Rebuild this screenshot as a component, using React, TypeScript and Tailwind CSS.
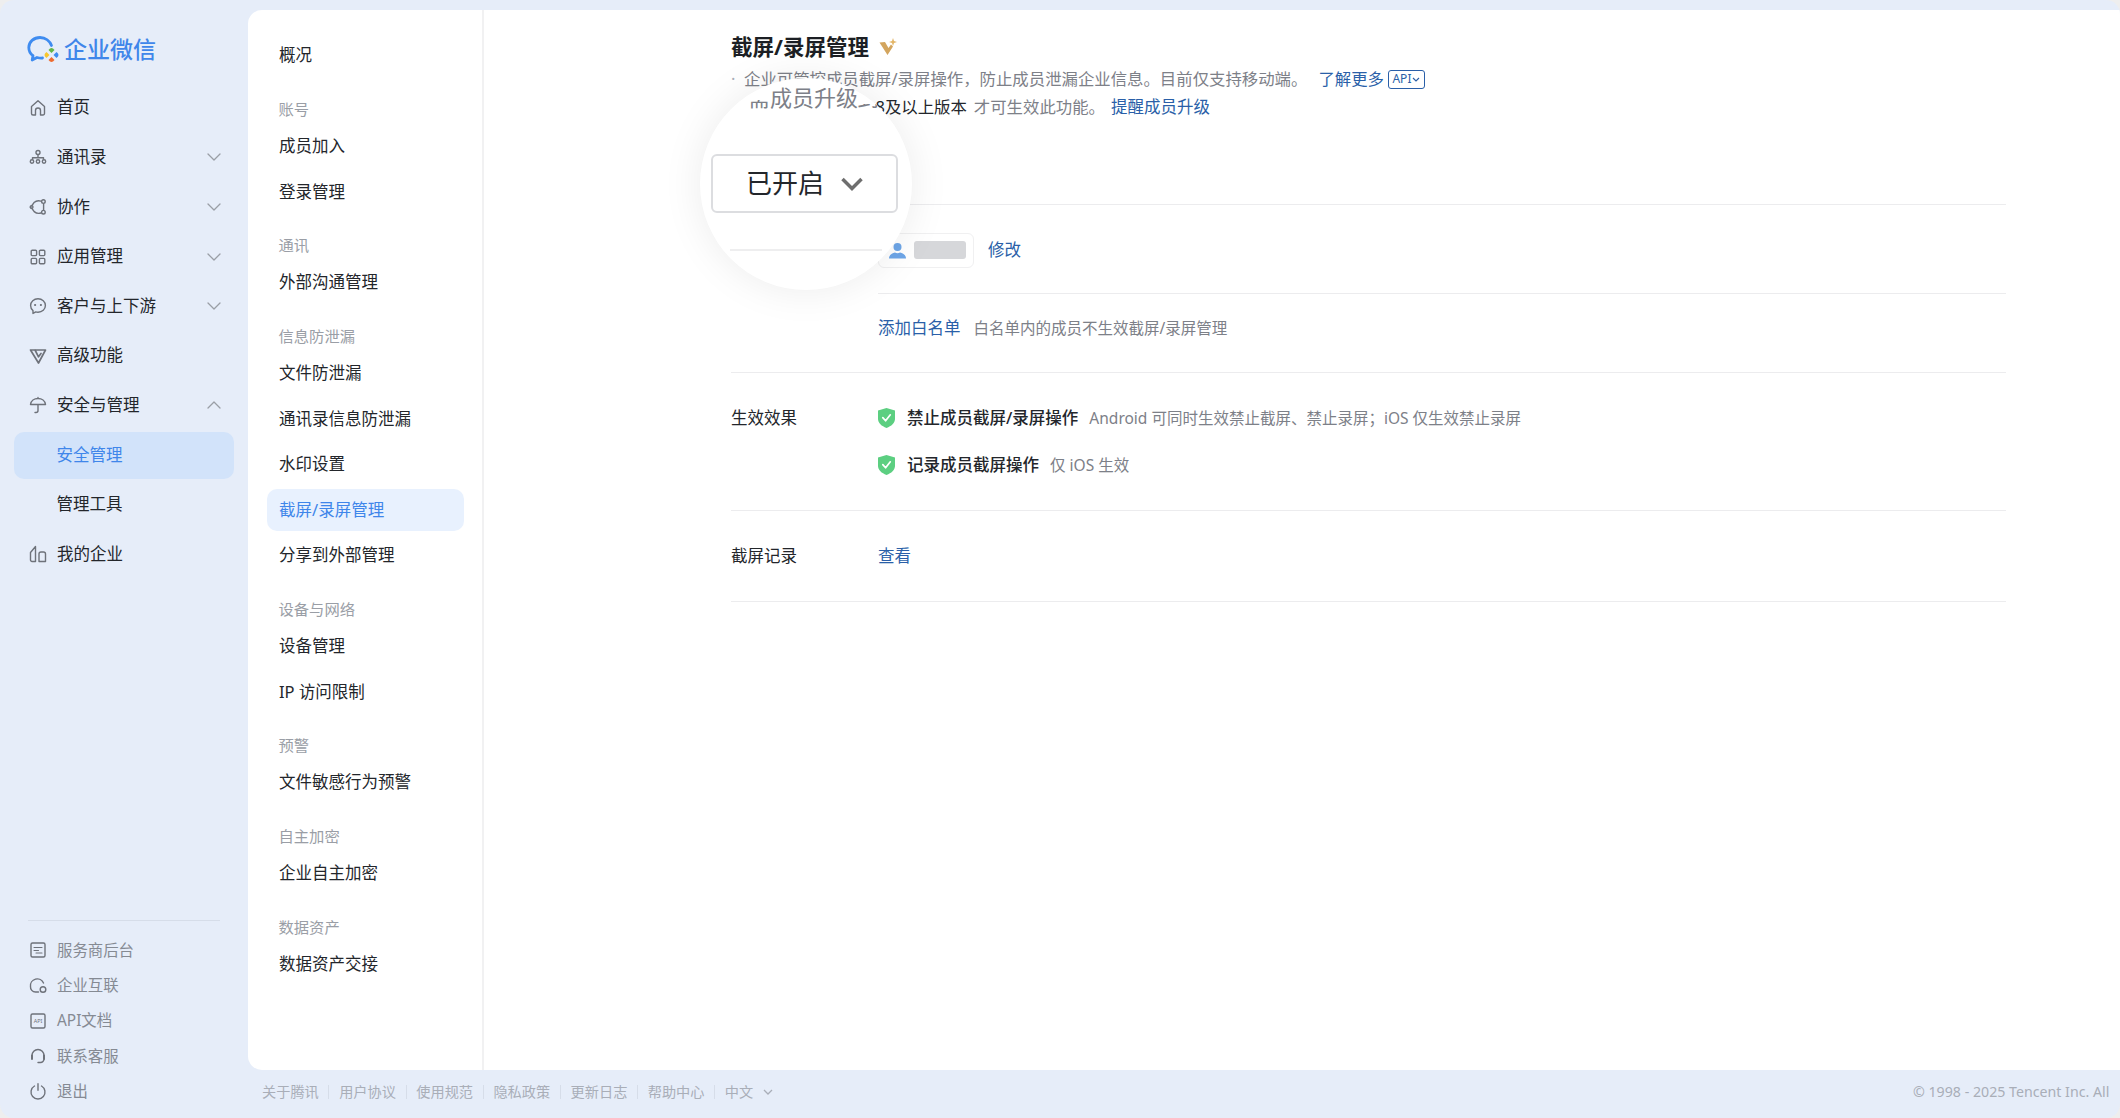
import type { ReactNode } from "react";

function Ico({ children, size = 18 }: { children: ReactNode; size?: number }) {
  return (
    <svg width={size} height={size} viewBox="0 0 18 18" fill="none" stroke="#6e727a" strokeWidth="1.4" strokeLinecap="round" strokeLinejoin="round" className="shrink-0">
      {children}
    </svg>
  );
}

function Chevron({ up = false }: { up?: boolean }) {
  return (
    <svg width="14" height="8" viewBox="0 0 14 8" fill="none" stroke="#9a9ea6" strokeWidth="1.3" strokeLinecap="round" strokeLinejoin="round" className="shrink-0">
      <path d={up ? "M1 7l6-6 6 6" : "M1 1l6 6 6-6"} />
    </svg>
  );
}

const mainNav: { label: string; icon: ReactNode; arrow?: "down" | "up" }[] = [
  { label: "首页", icon: <path d="M2.5 7.5 9 1.8l6.5 5.7v7a1.5 1.5 0 0 1-1.5 1.5h-2.5v-4.5a2.5 2.5 0 0 0-5 0V16H4a1.5 1.5 0 0 1-1.5-1.5z" /> },
  {
    label: "通讯录",
    arrow: "down",
    icon: (
      <>
        <circle cx="9" cy="4.5" r="2" />
        <path d="M3.5 11V9.8h11V11M9 7v2.8" />
        <circle cx="3" cy="13.5" r="1.7" />
        <circle cx="9" cy="13.5" r="1.7" />
        <circle cx="15" cy="13.5" r="1.7" />
      </>
    ),
  },
  {
    label: "协作",
    arrow: "down",
    icon: (
      <>
        <path d="M12 3.2A7 7 0 0 0 5 4.6L2.6 8M2.6 10l2.6 3.6a7 7 0 0 0 6.8 1.4M14.6 6v6" />
        <circle cx="14.4" cy="3.6" r="1.8" />
        <circle cx="14.4" cy="14.2" r="1.8" />
        <circle cx="2.6" cy="9" r="1.4" />
      </>
    ),
  },
  {
    label: "应用管理",
    arrow: "down",
    icon: (
      <>
        <rect x="2.2" y="2.2" width="5.4" height="5.4" rx="1" />
        <rect x="10.4" y="2.2" width="5.4" height="5.4" rx="1" />
        <rect x="2.2" y="10.4" width="5.4" height="5.4" rx="1" />
        <rect x="10.4" y="10.4" width="5.4" height="5.4" rx="1" />
      </>
    ),
  },
  {
    label: "客户与上下游",
    arrow: "down",
    icon: (
      <>
        <path d="M9 1.8c4.2 0 7.4 2.9 7.4 6.7s-3.2 6.7-7.4 6.7c-.8 0-1.5-.1-2.2-.3L4 16.4v-2.8C2.5 12.4 1.6 10.6 1.6 8.5 1.6 4.7 4.8 1.8 9 1.8z" />
        <path d="M6 8h.2M11.8 8h.2" strokeWidth="2" />
      </>
    ),
  },
  { label: "高级功能", icon: <path d="M1.5 3h15L9.5 16zM6 3l3.5 6.8L12 6.5" strokeWidth="1.7" /> },
  {
    label: "安全与管理",
    arrow: "up",
    icon: <path d="M1.5 8.5C2 4.8 5.2 2.5 9 2.5s7 2.3 7.5 6zM9 1.5v1M9 8.5v6a2 2 0 0 1-2 2H6" />,
  },
];

const bottomNav: { label: string; icon: ReactNode }[] = [
  {
    label: "服务商后台",
    icon: (
      <>
        <rect x="2" y="2" width="14" height="14" rx="1.5" />
        <path d="M5 6.5h8M5 9.5h4.5M7 12h6" strokeWidth="1.1" />
      </>
    ),
  },
  {
    label: "企业互联",
    icon: (
      <>
        <path d="M9.5 16H6.5A5 5 0 0 1 1.500 10.500 6.800 6.800 0 0 1 14.500 7" />
        <circle cx="14" cy="13.500" r="2.800" />
      </>
    ),
  },
  {
    label: "API文档",
    icon: (
      <>
        <rect x="2" y="2" width="14" height="14" rx="1.5" />
        <text x="9" y="10.500" textAnchor="middle" fontSize="5.500" fill="#6e727a" stroke="none">API</text>
      </>
    ),
  },
  {
    label: "联系客服",
    icon: (
      <>
        <path d="M3 10V8.5a6 6 0 0 1 12 0V12a3.500 3.500 0 0 1-3.500 3.500H9" />
        <path d="M3 8.5v3.5M15 8.5V12" strokeWidth="2" />
      </>
    ),
  },
  {
    label: "退出",
    icon: <path d="M5.5 4a7 7 0 1 0 7 0M9 1.8v6.5" />,
  },
];

const subNav: { heading?: string; items: string[] }[] = [
  { items: ["概况"] },
  { heading: "账号", items: ["成员加入", "登录管理"] },
  { heading: "通讯", items: ["外部沟通管理"] },
  { heading: "信息防泄漏", items: ["文件防泄漏", "通讯录信息防泄漏", "水印设置", "截屏/录屏管理", "分享到外部管理"] },
  { heading: "设备与网络", items: ["设备管理", "IP 访问限制"] },
  { heading: "预警", items: ["文件敏感行为预警"] },
  { heading: "自主加密", items: ["企业自主加密"] },
  { heading: "数据资产", items: ["数据资产交接"] },
];

const footerLinks = ["关于腾讯", "用户协议", "使用规范", "隐私政策", "更新日志", "帮助中心"];

function Logo() {
  return (
    <svg width="33" height="29" viewBox="0 0 33 29" fill="none" className="shrink-0">
      <path
        d="M24.5 10.5C22.8 6 18.5 2.5 13 2.5 6.8 2.5 1.8 6.8 1.8 12.5c0 3.3 1.6 6.3 4.200 8.200L5.200 25 10 22.500c2 .5 4 .7 5.500.5"
        stroke="#3f8cf0"
        strokeWidth="2.8"
        strokeLinecap="round"
        strokeLinejoin="round"
      />
      <path d="M24.500 18l-3-3q3-4 6 0z" fill="#62b649" />
      <path d="M26.500 20l3-3q4 3 0 6z" fill="#3f8cf0" />
      <path d="M24.500 22l3 3q-3 4-6 0z" fill="#ee6b2f" />
      <path d="M22.500 20l-3 3q-4-3 0-6z" fill="#f8c62e" />
    </svg>
  );
}

function Shield() {
  return (
    <svg width="17" height="20" viewBox="0 0 17 20" className="shrink-0">
      <path d="M8.500 0 17 2.600v8.200c0 4.300-3.600 7.400-8.500 9.200C3.600 18.200 0 15.100 0 10.800V2.600z" fill="#5ccf81" />
      <path d="M4.800 9.600l2.800 3.200 4.700-6" fill="none" stroke="#fff" strokeWidth="1.7" strokeLinecap="round" strokeLinejoin="round" />
    </svg>
  );
}

function Sidebar() {
  return (
    <aside className="flex h-full w-[248px] shrink-0 flex-col">
      <div className="flex h-[83px] shrink-0 items-center gap-[4px] pl-[27px] pt-[15px]">
        <Logo />
        <span className="text-[23px] font-medium text-[#3f86ea]">企业微信</span>
      </div>
      {mainNav.map((n) => (
        <div key={n.label} className="flex h-[49.6px] shrink-0 items-center gap-[10px] pl-[29px] pr-[27px] text-[16.5px] text-[#23262b]">
          {n.icon && <Ico>{n.icon}</Ico>}
          <span className="flex-1">{n.label}</span>
          {n.arrow && <Chevron up={n.arrow === "up"} />}
        </div>
      ))}
      <div className="flex h-[49.7px] shrink-0 items-center px-[14px]">
        <div className="flex h-[47px] w-[220px] items-center rounded-[10px] bg-[#d2e3fa] pl-[42.5px] text-[16.5px] text-[#3f86ea]">安全管理</div>
      </div>
      <div className="flex h-[49.7px] shrink-0 items-center pl-[56.5px] text-[16.5px] text-[#23262b]">管理工具</div>
      <div className="flex h-[49.7px] shrink-0 items-center gap-[10px] pl-[29px] text-[16.5px] text-[#23262b]">
        <Ico>
          <path d="M1.500 15V7.500L6.500 1.500V16.500H3a1.500 1.500 0 0 1-1.500-1.500zM10 16.500V9a2 2 0 0 1 2-2h2.500a2 2 0 0 1 2 2v7.500z" />
        </Ico>
        <span>我的企业</span>
      </div>
      <div className="mt-auto pb-[9px]">
        <div className="mx-[28px] mb-[12px] h-px bg-[#d6dde9]" />
        {bottomNav.map((n) => (
          <div key={n.label} className="flex h-[35.3px] items-center gap-[10px] pl-[29px] text-[15.4px] text-[#858a93]">
            <Ico>{n.icon}</Ico>
            <span>{n.label}</span>
          </div>
        ))}
      </div>
    </aside>
  );
}

function SubNav() {
  return (
    <nav className="w-[236px] shrink-0 border-r-2 border-[#f1f1f2] pl-[19px] pr-[18px] pt-[23px]">
      {subNav.map((g, i) => (
        <div key={i} className={g.heading ? "mt-[16.8px]" : ""}>
          {g.heading && <div className="flex h-[28.5px] items-center pl-[11.5px] text-[15.3px] text-[#9a9ea6]">{g.heading}</div>}
          {g.items.map((item) => (
            <div key={item} className="flex h-[45.5px] items-center">
              <div
                className={
                  item === "截屏/录屏管理"
                    ? "flex h-[42px] w-full items-center rounded-[10px] bg-[#e8f1fe] pl-[12px] text-[16.5px] text-[#3f86ea]"
                    : "flex h-[42px] w-full items-center pl-[12px] text-[16.5px] text-[#23262b]"
                }
              >
                {item}
              </div>
            </div>
          ))}
        </div>
      ))}
    </nav>
  );
}

function Content() {
  return (
    <main className="min-w-0 flex-1 pl-[247px] pr-[114px] pt-[22px]">
      <div className="flex h-[30px] items-center gap-[10px]">
        <h1 className="text-[21.5px] font-bold text-[#1c1f24]">截屏/录屏管理</h1>
        <svg width="18" height="18" viewBox="0 0 18 18" className="shrink-0">
          <path d="M.5 4.500L6 4l3.500 6L12 6.500l2 2L8.500 17z" fill="#d3a55e" />
          <path d="M14 0l1 3 3 1-3 1-1 3-1-3-3-1 3-1z" fill="#e3b566" />
        </svg>
      </div>
      <div className="mt-[3px] flex h-[28px] items-center text-[16.4px] text-[#7d8088]">
        <span className="w-[13px] text-[#a9aeb8]">·</span>
        <span>企业可管控成员截屏/录屏操作，防止成员泄漏企业信息。目前仅支持移动端。</span>
        <span className="ml-[11px] text-[#2a5fa8]">了解更多</span>
        <span className="ml-[4px] flex h-[19px] w-[37px] items-center justify-center gap-px rounded-[3px] border border-[#2a5fa8] text-[12px] text-[#2a5fa8]">
          API
          <svg width="8" height="5" viewBox="0 0 8 5" fill="none" stroke="#2a5fa8" strokeWidth="1.2">
            <path d="M1 1l3 3 3-3" />
          </svg>
        </span>
      </div>
      <div className="flex h-[28px] items-center pl-[144.5px] text-[16.4px] text-[#7d8088]">
        <span className="text-[#23262b]">8及以上版本</span>
        <span className="ml-[7px]">才可生效此功能。</span>
        <span className="ml-[6px] text-[16.5px] text-[#2a5fa8]">提醒成员升级</span>
      </div>

      <div className="h-[84px] border-b border-[#ececee]" />

      <div className="grid grid-cols-[147px_1fr] border-b border-[#ececee] text-[16.5px]">
        <div />
        <div>
          <div className="flex h-[89px] items-center gap-[14px] border-b border-[#ececee] pt-[2px]">
            <div className="flex h-[35px] w-[96px] items-center gap-[8px] rounded-[6px] border border-[#f0f0f1] pl-[10px]">
              <svg width="17" height="17" viewBox="0 0 17 17" className="shrink-0">
                <circle cx="8.5" cy="5" r="4" fill="#6ea6e8" />
                <path d="M0 16.500c0-3.500 3-5.500 6-6 1.500 1 3.500 1 5 0 3 .5 6 2.500 6 6z" fill="#6ea6e8" />
              </svg>
              <div className="h-[18px] w-[52px] rounded-[3px] bg-[#d6d7da]" />
            </div>
            <span className="text-[#2a5fa8]">修改</span>
          </div>
          <div className="flex h-[78px] items-baseline gap-[13px] pt-[20px] leading-[28px]">
            <span className="text-[#2a5fa8]">添加白名单</span>
            <span className="text-[15.5px] text-[#7d8088]">白名单内的成员不生效截屏/录屏管理</span>
          </div>
        </div>
      </div>

      <div className="grid grid-cols-[147px_1fr] border-b border-[#ececee] pb-[31px] pt-[31px] text-[16.5px] leading-[28px]">
        <div className="text-[#23262b]">生效效果</div>
        <div className="flex flex-col gap-[19px]">
          <div className="flex items-center gap-[12px]">
            <Shield />
            <span className="font-medium text-[#23262b]">禁止成员截屏/录屏操作</span>
            <span className="-ml-[1px] text-[15.5px] text-[#7d8088]">Android 可同时生效禁止截屏、禁止录屏；iOS 仅生效禁止录屏</span>
          </div>
          <div className="flex items-center gap-[12px]">
            <Shield />
            <span className="font-medium text-[#23262b]">记录成员截屏操作</span>
            <span className="-ml-[1px] text-[15.5px] text-[#7d8088]">仅 iOS 生效</span>
          </div>
        </div>
      </div>

      <div className="grid grid-cols-[147px_1fr] border-b border-[#ececee] pb-[31px] pt-[31px] text-[16.5px] leading-[28px]">
        <div className="text-[#23262b]">截屏记录</div>
        <div className="text-[#2a5fa8]">查看</div>
      </div>
    </main>
  );
}

function Magnifier() {
  return (
    <div className="absolute left-[700px] top-[78px] h-[212px] w-[212px] overflow-hidden rounded-full bg-white shadow-[0_0_40px_rgba(0,0,0,0.08)]">
      <div className="absolute left-[48px] top-[22px] h-[11px] w-[22px] overflow-hidden text-[22px] leading-[28px] text-[#7d8088]">
        <div className="-mt-[17px]">需</div>
      </div>
      <div className="absolute left-[70px] top-[5px] whitespace-nowrap text-[22px] leading-[28px] text-[#7d8088]">成员升级</div>
      <div className="absolute left-[157px] top-[26px] h-[7px] w-[22px] overflow-hidden text-[22px] leading-[28px] text-[#7d8088]">
        <div className="-mt-[21px]">到</div>
      </div>
      <div className="absolute left-[11px] top-[76px] flex h-[59px] w-[187px] items-center justify-center gap-[17px] rounded-[6px] border-2 border-[#dcdde0] bg-white text-[26px] text-[#23262b]">
        已开启
        <svg width="22" height="14" viewBox="0 0 22 14" fill="none" stroke="#6e6e6e" strokeWidth="3.5">
          <path d="M1.5 2l9.5 9.500L20.500 2" />
        </svg>
      </div>
      <div className="absolute left-[30px] top-[171px] h-[2px] w-[152px] bg-[#eeeeef]" />
    </div>
  );
}

function Footer() {
  return (
    <footer className="flex flex-1 items-center pb-[4px] pl-[14px] text-[14.2px] text-[#a9aeb8]">
      <div className="flex flex-1 items-center">
        {footerLinks.map((t) => (
          <div key={t} className="flex items-center">
            <span>{t}</span>
            <span className="mx-[9.7px] h-[14px] w-px bg-[#d6dde9]" />
          </div>
        ))}
        <span>中文</span>
        <svg width="10" height="6" viewBox="0 0 10 6" fill="none" stroke="#a9aeb8" strokeWidth="1.3" className="ml-[10px]">
          <path d="M1 1l4 4 4-4" />
        </svg>
      </div>
      <div className="w-[207px] whitespace-nowrap">© 1998 - 2025 Tencent Inc. All</div>
    </footer>
  );
}

export default function App() {
  return (
    <div className="h-[1118px] w-[2120px] overflow-hidden bg-[#eeeeee] font-['Noto_Sans','Noto_Sans_CJK_SC',sans-serif]">
      <div className="relative flex h-full overflow-hidden rounded-[14px] bg-[#e6edf9]">
        <Sidebar />
        <div className="flex min-w-0 flex-1 flex-col pt-[10px]">
          <div className="flex h-[1060px] shrink-0 rounded-l-[14px] bg-white">
            <SubNav />
            <Content />
          </div>
          <Footer />
        </div>
        <Magnifier />
      </div>
    </div>
  );
}
